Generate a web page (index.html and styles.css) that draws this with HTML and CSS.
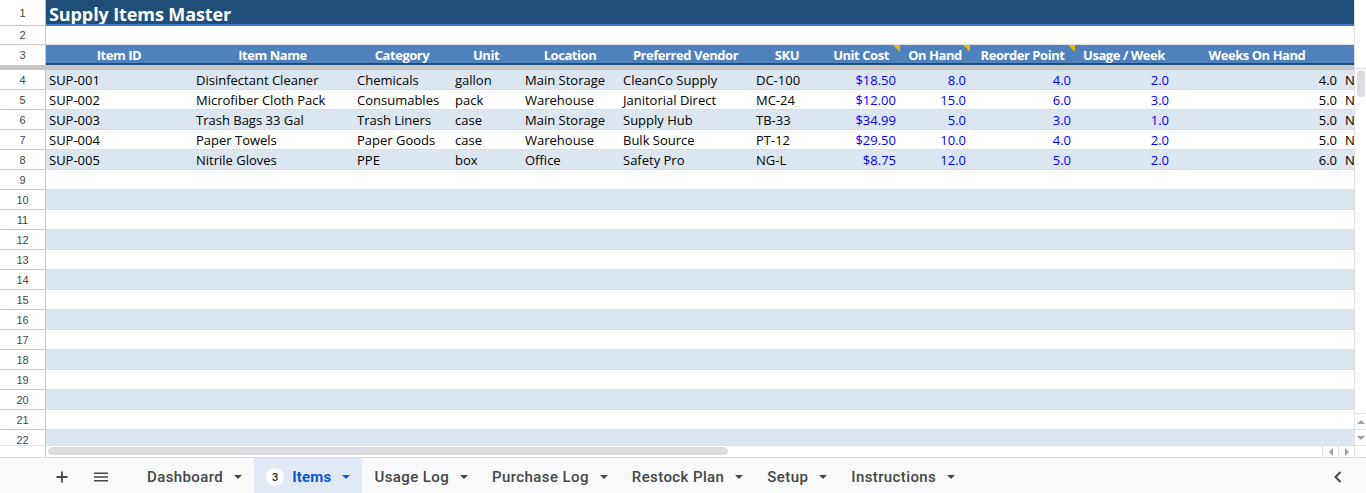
FILE: index.html
```html
<!DOCTYPE html>
<html>
<head>
<meta charset="utf-8">
<link rel="stylesheet" href="styles.css">
</head>
<body>
<div class="app">
  <div class="sheet">
    <div class="grid">
      <div class="row title-row">
        <div class="rh">1</div>
        <div class="title-cell">Supply Items Master</div>
      </div>
      <div class="row blank-row">
        <div class="rh">2</div>
        <div class="blank-cell"></div>
      </div>
      <div class="row head-row">
        <div class="rh">3</div>
        <div class="h">Item ID</div>
        <div class="h">Item Name</div>
        <div class="h">Category</div>
        <div class="h">Unit</div>
        <div class="h">Location</div>
        <div class="h">Preferred Vendor</div>
        <div class="h">SKU</div>
        <div class="h note">Unit Cost</div>
        <div class="h note">On Hand</div>
        <div class="h note">Reorder Point</div>
        <div class="h">Usage / Week</div>
        <div class="h">Weeks On Hand</div>
        <div class="h"></div>
      </div>
      <div class="freeze"></div>

      <div class="row data band">
        <div class="rh">4</div>
        <div class="c first">SUP-001</div><div class="c">Disinfectant Cleaner</div><div class="c">Chemicals</div><div class="c">gallon</div><div class="c">Main Storage</div><div class="c">CleanCo Supply</div><div class="c">DC-100</div>
        <div class="c r blue">$18.50</div><div class="c r blue">8.0</div><div class="c r blue">4.0</div><div class="c r blue">2.0</div><div class="c r">4.0</div><div class="c">No</div>
      </div>
      <div class="row data">
        <div class="rh">5</div>
        <div class="c first">SUP-002</div><div class="c">Microfiber Cloth Pack</div><div class="c">Consumables</div><div class="c">pack</div><div class="c">Warehouse</div><div class="c">Janitorial Direct</div><div class="c">MC-24</div>
        <div class="c r blue">$12.00</div><div class="c r blue">15.0</div><div class="c r blue">6.0</div><div class="c r blue">3.0</div><div class="c r">5.0</div><div class="c">No</div>
      </div>
      <div class="row data band">
        <div class="rh">6</div>
        <div class="c first">SUP-003</div><div class="c">Trash Bags 33 Gal</div><div class="c">Trash Liners</div><div class="c">case</div><div class="c">Main Storage</div><div class="c">Supply Hub</div><div class="c">TB-33</div>
        <div class="c r blue">$34.99</div><div class="c r blue">5.0</div><div class="c r blue">3.0</div><div class="c r blue">1.0</div><div class="c r">5.0</div><div class="c">No</div>
      </div>
      <div class="row data">
        <div class="rh">7</div>
        <div class="c first">SUP-004</div><div class="c">Paper Towels</div><div class="c">Paper Goods</div><div class="c">case</div><div class="c">Warehouse</div><div class="c">Bulk Source</div><div class="c">PT-12</div>
        <div class="c r blue">$29.50</div><div class="c r blue">10.0</div><div class="c r blue">4.0</div><div class="c r blue">2.0</div><div class="c r">5.0</div><div class="c">No</div>
      </div>
      <div class="row data band">
        <div class="rh">8</div>
        <div class="c first">SUP-005</div><div class="c">Nitrile Gloves</div><div class="c">PPE</div><div class="c">box</div><div class="c">Office</div><div class="c">Safety Pro</div><div class="c">NG-L</div>
        <div class="c r blue">$8.75</div><div class="c r blue">12.0</div><div class="c r blue">5.0</div><div class="c r blue">2.0</div><div class="c r">6.0</div><div class="c">No</div>
      </div>
      <div class="row data"><div class="rh">9</div><div class="fill"></div></div>
      <div class="row data band"><div class="rh">10</div><div class="fill"></div></div>
      <div class="row data"><div class="rh">11</div><div class="fill"></div></div>
      <div class="row data band"><div class="rh">12</div><div class="fill"></div></div>
      <div class="row data"><div class="rh">13</div><div class="fill"></div></div>
      <div class="row data band"><div class="rh">14</div><div class="fill"></div></div>
      <div class="row data"><div class="rh">15</div><div class="fill"></div></div>
      <div class="row data band"><div class="rh">16</div><div class="fill"></div></div>
      <div class="row data"><div class="rh">17</div><div class="fill"></div></div>
      <div class="row data band"><div class="rh">18</div><div class="fill"></div></div>
      <div class="row data"><div class="rh">19</div><div class="fill"></div></div>
      <div class="row data band"><div class="rh">20</div><div class="fill"></div></div>
      <div class="row data"><div class="rh">21</div><div class="fill"></div></div>
      <div class="row data band"><div class="rh">22</div><div class="fill"></div></div>
    </div>
    <div class="vscroll">
      <div class="vs-frozen"></div>
      <div class="vs-track"><div class="vs-thumb"></div></div>
      <div class="vs-btn"><span class="tri-up"></span></div>
      <div class="vs-btn"><span class="tri-down"></span></div>
    </div>
  </div>
  <div class="hscroll">
    <div class="hs-rh"></div>
    <div class="hs-track"><div class="hs-thumb"></div></div>
    <div class="hs-btn"><span class="tri-left"></span></div>
    <div class="hs-btn"><span class="tri-right"></span></div>
    <div class="hs-corner"></div>
  </div>
  <div class="tabbar">
    <div class="icon-btn">
      <svg width="14" height="14" viewBox="0 0 14 14"><path d="M7 1.5v11M1.5 7h11" stroke="#444746" stroke-width="1.8" fill="none"/></svg>
    </div>
    <div class="icon-btn">
      <svg width="16" height="12" viewBox="0 0 16 12"><path d="M1 2.2h14M1 6h14M1 9.8h14" stroke="#444746" stroke-width="1.6" fill="none"/></svg>
    </div>
    <div class="tabs">
      <div class="tab">Dashboard<span class="dd"></span></div>
      <div class="tab active"><span class="badge">3</span>Items<span class="dd"></span></div>
      <div class="tab">Usage Log<span class="dd"></span></div>
      <div class="tab">Purchase Log<span class="dd"></span></div>
      <div class="tab">Restock Plan<span class="dd"></span></div>
      <div class="tab">Setup<span class="dd"></span></div>
      <div class="tab">Instructions<span class="dd"></span></div>
    </div>
    <div class="chev">
      <svg width="10" height="14" viewBox="0 0 10 14"><path d="M7.5 2L2.5 7l5 5" stroke="#444746" stroke-width="2" fill="none"/></svg>
    </div>
  </div>
</div>
</body>
</html>
```
FILE: styles.css
```css
* { box-sizing: border-box; }
html, body { margin: 0; padding: 0; }
body {
  width: 1366px;
  height: 493px;
  overflow: hidden;
  background: #fff;
  font-family: "Open Sans", "Liberation Sans", sans-serif;
}
.app { display: flex; flex-direction: column; width: 1366px; height: 493px; }

.sheet { display: flex; height: 445px; overflow: hidden; }
.grid { width: 1354px; flex: none; overflow: hidden; }

.row {
  display: grid;
  grid-template-columns: 46px 146px 161px 98px 70px 98px 133px 70px 78px 70px 105px 98px 168px 13px;
}
.rh {
  border-right: 1px solid #c4c7c5;
  border-bottom: 1px solid #c4c7c5;
  font: 11px/1 "Liberation Sans", Arial, sans-serif;
  color: #444746;
  display: flex;
  align-items: center;
  justify-content: center;
  padding-top: 1px;
  background: #fff;
}

.title-row { height: 26px; }
.title-cell {
  grid-column: 2 / -1;
  background: #1f4e79;
  border-bottom: 2px solid #3c78d8;
  color: #fff;
  font-weight: 700;
  font-size: 18px;
  line-height: 24px;
  padding-top: 2px;
  letter-spacing: -0.1px;
  padding-left: 3px;
  white-space: nowrap;
  overflow: hidden;
}

.blank-row { height: 19px; }
.blank-cell { grid-column: 2 / -1; border-bottom: 1px solid #e1e1e1; }

.head-row { height: 20px; }
.head-row .rh { border-bottom: none; }
.h {
  height: 20px;
  background: #4f81bd;
  border-bottom: 2px solid #1f4e79;
  color: #fff;
  font-weight: 700;
  font-size: 13px;
  line-height: 16px;
  padding-top: 2px;
  text-align: center;
  white-space: nowrap;
  letter-spacing: -0.45px;
  position: relative;
}
.note::after {
  content: "";
  position: absolute;
  top: 0;
  right: 0;
  border-top: 7px solid #f2b600;
  border-left: 7px solid transparent;
}

.freeze { height: 5px; background: #c7c7c7; }

.data { height: 20px; }
.data > div:not(.rh) { border-bottom: 1px solid #dadde2; }
.band > div:not(.rh) { background: #dce6f1; }
.fill { grid-column: 2 / -1; }
.c {
  font-size: 13px;
  line-height: 18px;
  padding: 1px 3px 0 4px;
  color: #000;
  white-space: nowrap;
  overflow: hidden;
}
.c.first { padding-left: 3px; }
.c.r { text-align: right; padding: 1px 4px 0 0; }
.c.blue { color: #0000ff; }

/* vertical scrollbar */
.vscroll {
  width: 12px;
  flex: none;
  border-left: 1px solid #e0e0e0;
  display: flex;
  flex-direction: column;
}
.vs-frozen { height: 69px; border-bottom: 1px solid #e0e0e0; flex: none; }
.vs-track { flex: 1; padding: 1px 0 0 2px; }
.vs-thumb { width: 8px; height: 27px; border-radius: 4px; background: #dadce0; }
.vs-btn {
  height: 16px;
  flex: none;
  border-top: 1px solid #e0e0e0;
  display: flex;
  align-items: center;
  justify-content: center;
}
.tri-up { border-left: 4px solid transparent; border-right: 4px solid transparent; border-bottom: 4px solid #9aa0a6; }
.tri-down { border-left: 4px solid transparent; border-right: 4px solid transparent; border-top: 4px solid #9aa0a6; }
.tri-left { border-top: 4px solid transparent; border-bottom: 4px solid transparent; border-right: 4px solid #9aa0a6; }
.tri-right { border-top: 4px solid transparent; border-bottom: 4px solid transparent; border-left: 4px solid #9aa0a6; }

/* horizontal scrollbar */
.hscroll {
  height: 13px;
  display: flex;
  border-top: 1px solid #e0e0e0;
  border-bottom: 1px solid #dadce0;
  flex: none;
}
.hs-rh { width: 46px; border-right: 1px solid #c4c7c5; flex: none; }
.hs-track { flex: 1; padding: 1px 0 0 2px; }
.hs-thumb { width: 680px; height: 8px; border-radius: 4px; background: #dadce0; }
.hs-btn {
  width: 16px;
  flex: none;
  border-left: 1px solid #e0e0e0;
  display: flex;
  align-items: center;
  justify-content: center;
}
.hs-corner { width: 12px; flex: none; border-left: 1px solid #e0e0e0; }

/* tab bar */
.tabbar {
  height: 35px;
  flex: none;
  background: #f8f9fa;
  display: flex;
  align-items: stretch;
  padding-left: 44px;
  font-family: Roboto, "Liberation Sans", sans-serif;
}
.icon-btn {
  width: 36px;
  display: flex;
  align-items: center;
  justify-content: center;
  padding-top: 3px;
}
.icon-btn + .icon-btn { margin-left: 3px; }
.tabs { display: flex; margin-left: 16px; flex: 1; }
.tab {
  display: flex;
  align-items: center;
  padding: 3px 12px 0;
  font-size: 15px;
  font-weight: 500;
  color: #444746;
  letter-spacing: 0.4px;
  white-space: nowrap;
}
.dd {
  margin-left: 11px;
  border-left: 4px solid transparent;
  border-right: 4px solid transparent;
  border-top: 4px solid #444746;
}
.tab.active { background: #e1e9f7; color: #0b57d0; font-weight: 700; letter-spacing: 0.2px; }
.tab.active .dd { border-top-color: #0b57d0; }
.badge {
  width: 18px;
  height: 18px;
  border-radius: 50%;
  background: #fff;
  color: #1f1f1f;
  font-size: 11px;
  font-weight: 500;
  display: flex;
  align-items: center;
  justify-content: center;
  margin-right: 8px;
}
.chev {
  width: 40px;
  margin-right: 8px;
  display: flex;
  align-items: center;
  justify-content: center;
  padding-top: 3px;
}
```
